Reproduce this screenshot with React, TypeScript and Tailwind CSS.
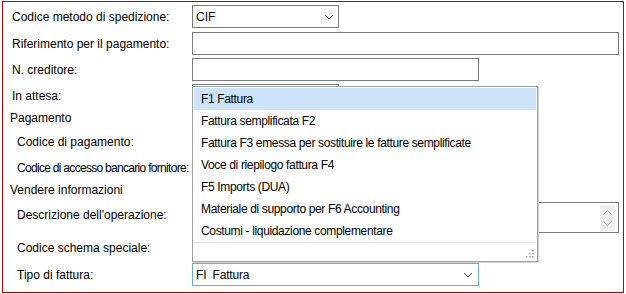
import React from "react";

const Chevron: React.FC<{ color?: string }> = ({ color = "#444" }) => (
  <svg width="10" height="6" viewBox="0 0 10 6" className="shrink-0">
    <path d="M1 1 L5 5 L9 1" fill="none" stroke={color} strokeWidth="1" />
  </svg>
);

const Label: React.FC<{ text: string; sub?: boolean; tight?: boolean }> = ({ text, sub, tight }) => (
  <div
    className={`w-[189px] shrink-0 whitespace-nowrap ${sub ? "pl-[14px]" : "pl-[9px]"} ${
      tight ? "tracking-[-0.7px]" : ""
    }`}
  >
    {text}
  </div>
);

const items = [
  "F1 Fattura",
  "Fattura semplificata F2",
  "Fattura F3 emessa per sostituire le fatture semplificate",
  "Voce di riepilogo fattura F4",
  "F5 Imports (DUA)",
  "Materiale di supporto per F6 Accounting",
  "Costumi - liquidazione complementare",
];

const App: React.FC = () => {
  return (
    <div
      className="w-[626px] h-[294px] bg-white text-[12px] text-black pt-[1px] pl-[2px]"
      style={{ fontFamily: '"Liberation Sans", Arial, sans-serif' }}
    >
      <div className="relative w-[622px] h-[292px] border border-[#c00000] pt-[3px] flex flex-col">
        <div className="flex items-center h-[23px]">
          <Label text="Codice metodo di spedizione:" />
          <div className="w-[147px] h-[23px] border border-[#7a7a7a] flex items-center justify-between pl-[3px] pr-[4px]">
            <span>CIF</span>
            <Chevron />
          </div>
        </div>

        <div className="flex items-center h-[23px] mt-[4px]">
          <Label text="Riferimento per il pagamento:" />
          <div className="w-[427px] h-[23px] border border-[#7a7a7a]" />
        </div>

        <div className="flex items-center h-[23px] mt-[3px]">
          <Label text="N. creditore:" />
          <div className="w-[287px] h-[23px] border border-[#7a7a7a]" />
        </div>

        <div className="flex items-center h-[23px] mt-[3px]">
          <Label text="In attesa:" />
          <div className="w-[147px] h-[23px] border border-[#7a7a7a]" />
        </div>

        <div className="h-[22px] flex items-center pl-[7px]">Pagamento</div>

        <div className="flex items-center h-[23px] mt-[1px]">
          <Label text="Codice di pagamento:" sub />
          <div className="w-[147px] h-[23px] border border-[#7a7a7a]" />
        </div>

        <div className="flex items-center h-[23px] mt-[3px]">
          <Label text="Codice di accesso bancario fornitore:" sub tight />
          <div className="w-[147px] h-[23px] border border-[#7a7a7a]" />
        </div>

        <div className="h-[22px] flex items-center pl-[7px]">Vendere informazioni</div>

        <div className="flex h-[31px] mt-[1px]">
          <div className="w-[189px] shrink-0 pl-[14px] pt-[4px]">Descrizione dell'operazione:</div>
          <div className="w-[427px] h-[31px] border border-[#7a7a7a] flex justify-end pr-[3px] pt-[2px]">
            <div className="w-[15px] h-[26px] bg-[#f0f0f0] flex flex-col items-center justify-around py-[2px]">
              <svg width="9" height="5" viewBox="0 0 9 5">
                <path d="M0.5 4.5 L4.5 0.5 L8.5 4.5" fill="none" stroke="#b5b5b5" strokeWidth="1" />
              </svg>
              <svg width="9" height="5" viewBox="0 0 9 5">
                <path d="M0.5 0.5 L4.5 4.5 L8.5 0.5" fill="none" stroke="#b5b5b5" strokeWidth="1" />
              </svg>
            </div>
          </div>
        </div>

        <div className="flex items-center h-[23px] mt-[3px]">
          <Label text="Codice schema speciale:" sub />
          <div className="w-[147px] h-[23px] border border-[#7a7a7a]" />
        </div>

        <div className="flex items-center h-[23px] mt-[4px]">
          <Label text="Tipo di fattura:" sub />
          <div className="w-[287px] h-[23px] border border-[#6aa8e6] flex items-center justify-between pl-[3px] pr-[5px]">
            <span className="tracking-[-0.2px]">FI&nbsp; Fattura</span>
            <Chevron />
          </div>
        </div>

        <div className="absolute left-[189px] top-[84px] w-[346px] h-[176px] bg-white border border-[#a0a0a0] shadow-[1px_1px_0_#d4d4d4] flex flex-col p-[1px] tracking-[-0.35px]">
          {items.map((t, i) => (
            <div
              key={t}
              className={`h-[22px] shrink-0 flex items-center pl-[7px] whitespace-nowrap ${
                i === 0 ? "bg-[#cce4f7]" : ""
              }`}
            >
              {t}
            </div>
          ))}
          <div className="flex-1 border-t border-[#e3e3e3] flex justify-end items-end pr-[2px] pb-[2px]">
            <svg width="9" height="9" viewBox="0 0 9 9">
              <rect x="7" y="1" width="1.5" height="1.5" fill="#a8a8a8" />
              <rect x="4" y="4" width="1.5" height="1.5" fill="#a8a8a8" />
              <rect x="7" y="4" width="1.5" height="1.5" fill="#a8a8a8" />
              <rect x="1" y="7" width="1.5" height="1.5" fill="#a8a8a8" />
              <rect x="4" y="7" width="1.5" height="1.5" fill="#a8a8a8" />
              <rect x="7" y="7" width="1.5" height="1.5" fill="#a8a8a8" />
            </svg>
          </div>
        </div>
      </div>
    </div>
  );
};

export default App;
